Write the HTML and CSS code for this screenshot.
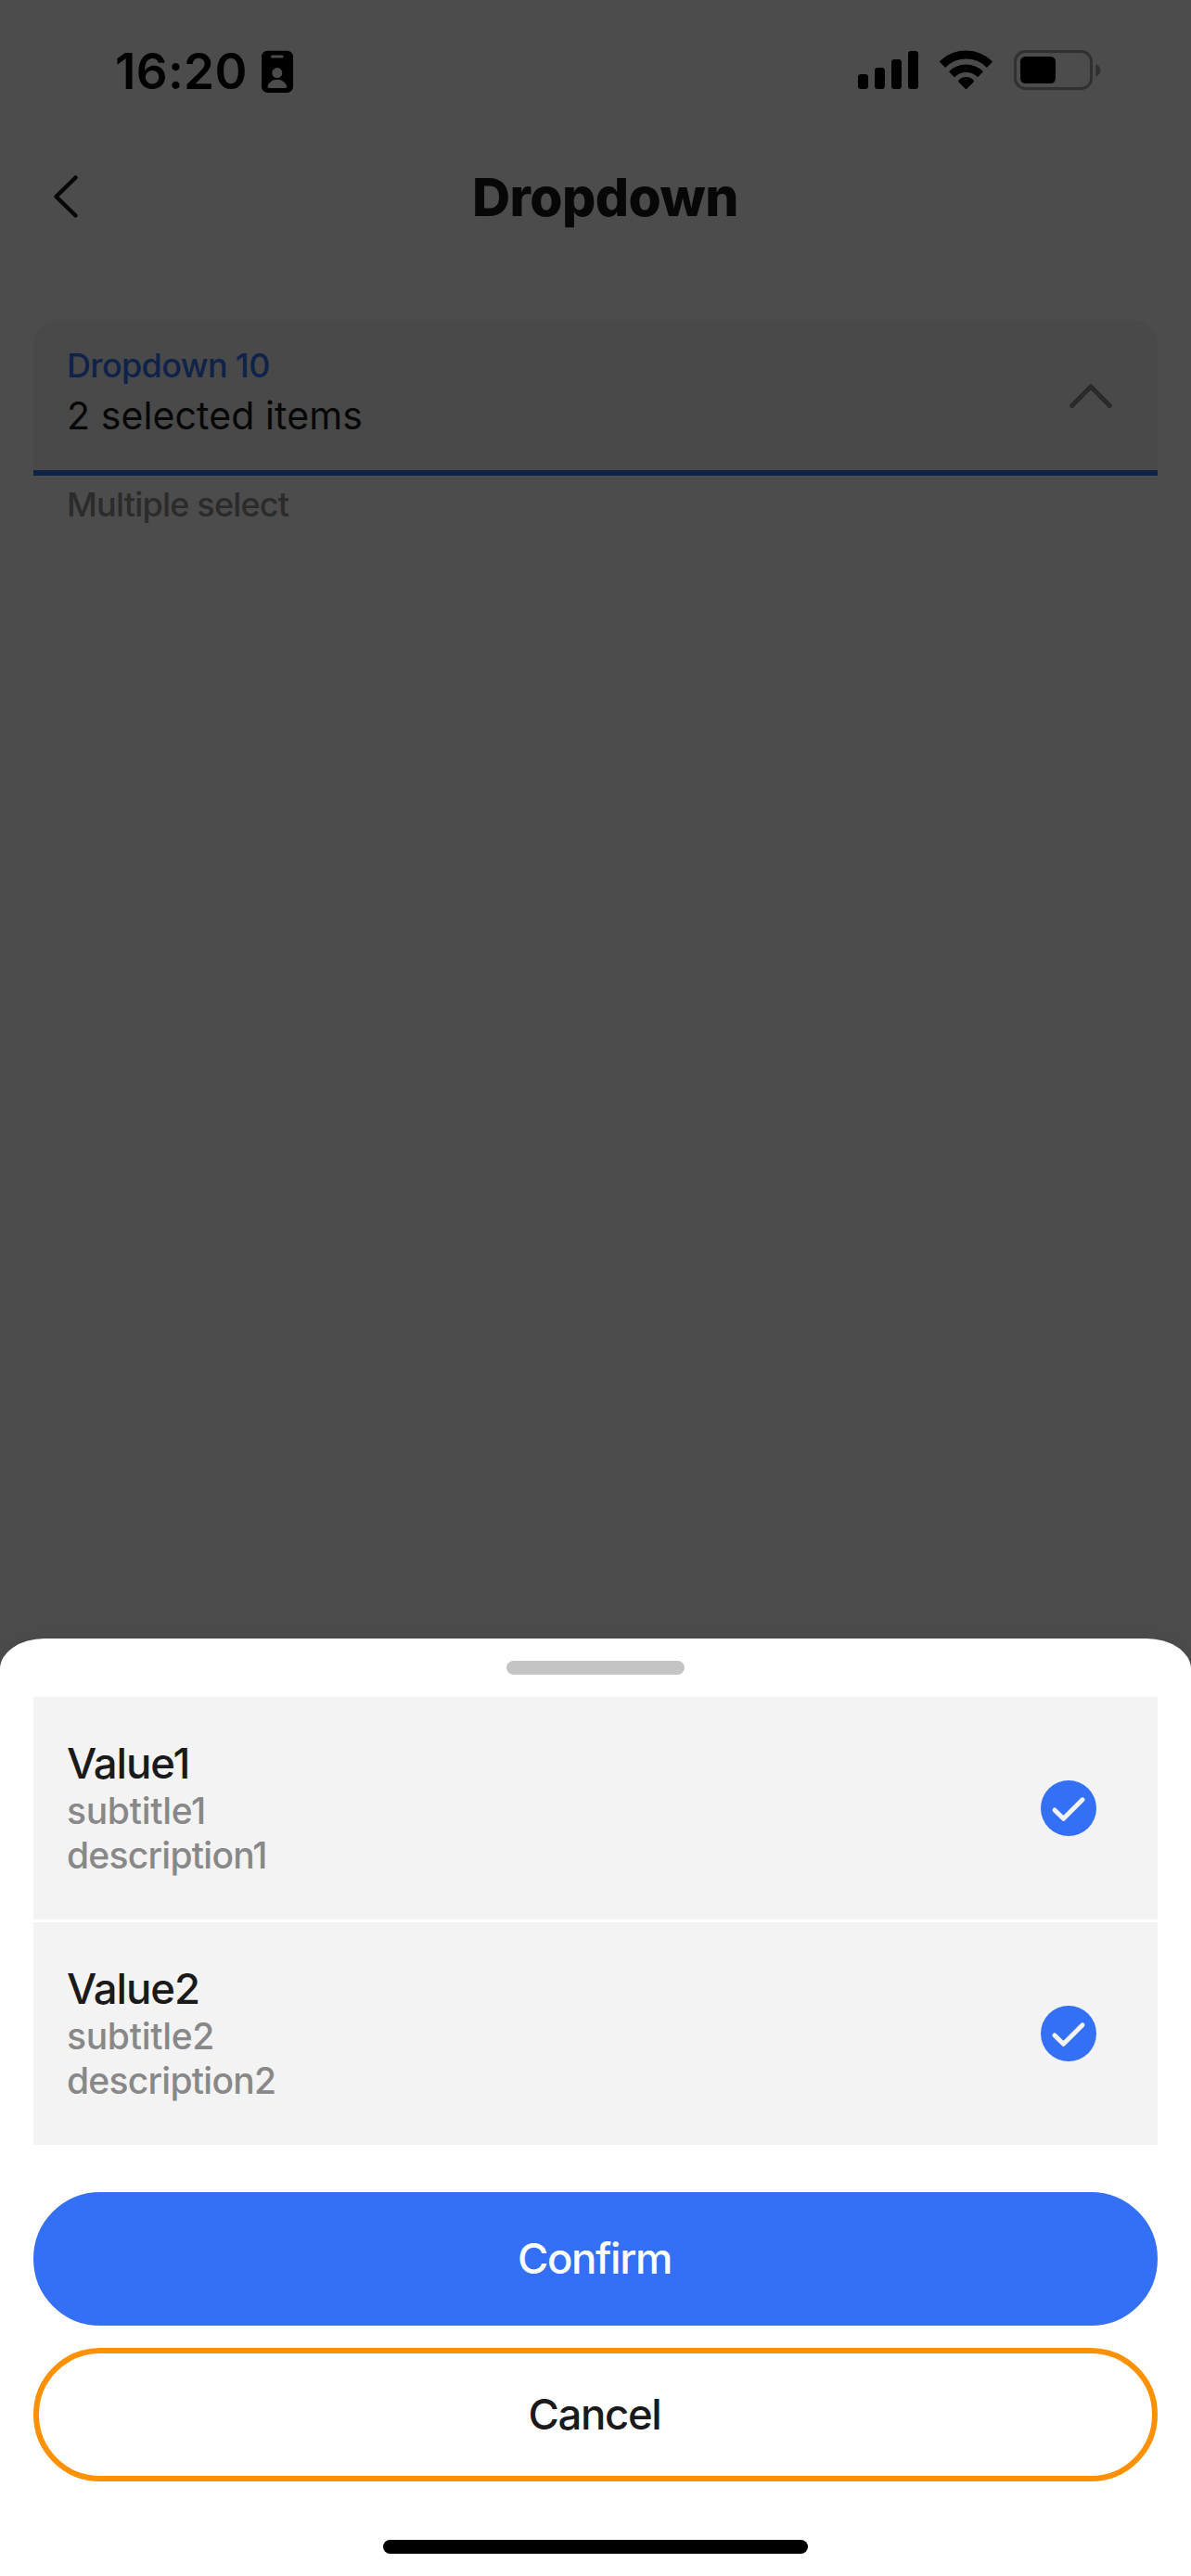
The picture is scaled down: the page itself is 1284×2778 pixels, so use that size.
FILE: index.html
```html
<!DOCTYPE html>
<html lang="en">
<head>
<meta charset="utf-8">
<title>Dropdown</title>
<link rel="stylesheet" href="styles.css">
</head>
<body>
<div class="screen">
  <div class="status">
    <span class="clock">16:20</span>
    <svg class="badge" width="34" height="46" viewBox="282 54 34 46">
      <rect x="282" y="54.7" width="34" height="45.2" rx="6.5" fill="#000"/>
      <rect x="292" y="59.6" width="13.6" height="3" rx="1.5" fill="#4c4c4c"/>
      <circle cx="298.8" cy="78.6" r="5.5" fill="#4c4c4c"/>
      <path d="M290 95Q288.300 95 288.600 93.200C290 88.500 294 85.800 298.800 85.800S307.600 88.500 309.200 93.200Q309.500 95 307.600 95Z" fill="#4c4c4c"/>
    </svg>
    <div class="indicators">
      <svg width="65" height="46" viewBox="925 54 65 46">
        <rect x="925" y="80" width="11" height="16" rx="3.3"/>
        <rect x="943" y="73" width="11" height="23" rx="3.3"/>
        <rect x="961" y="64" width="11" height="32" rx="3.3"/>
        <rect x="979" y="55" width="11" height="41" rx="3.3"/>
      </svg>
      <svg width="58" height="46" viewBox="1013 54 58 46">
        <path d="M1016 69.700A36 36 0 0 1 1067 69.700" fill="none" stroke="#000" stroke-width="9"/>
        <path d="M1026 80.200A22 22 0 0 1 1057 80.200" fill="none" stroke="#000" stroke-width="8.500"/>
        <path d="M1033.500 88.400Q1032.400 87.300 1033.600 86.200Q1037 83 1041.500 83T1049.400 86.200Q1050.600 87.300 1049.500 88.400L1042.500 95.500Q1041.500 96.500 1040.500 95.500Z"/>
      </svg>
      <svg width="94" height="46" viewBox="1093 54 94 46">
        <rect x="1094.500" y="55.500" width="82" height="40" rx="11" fill="none" stroke="#303030" stroke-width="3"/>
        <rect x="1100" y="61" width="38" height="29" rx="5.500"/>
        <path d="M1181.300 69C1184.600 70.200 1186.500 72.800 1186.500 75.700S1184.600 81.200 1181.300 82.400Z" fill="#303030"/>
      </svg>
    </div>
  </div>

  <div class="header">
    <svg class="back" width="32" height="50" viewBox="0 0 32 50">
      <path d="M26.500 4.500L5.500 25L26.500 45.500" fill="none" stroke="#070707" stroke-width="4.500" stroke-linecap="round" stroke-linejoin="round"/>
    </svg>
    <h1 class="title">Dropdown</h1>
  </div>

  <div class="form">
    <div class="field">
      <div class="field-text">
        <div class="label">Dropdown 10</div>
        <div class="value">2 selected items</div>
      </div>
      <svg width="48" height="30" viewBox="0 0 48 30">
        <path d="M3.700 26.500L24 6L44.300 26.500" fill="none" stroke="#2a2a2a" stroke-width="5" stroke-linecap="round" stroke-linejoin="round"/>
      </svg>
    </div>
    <div class="helper">Multiple select</div>
  </div>

  <div class="sheet">
    <div class="handle"></div>
    <div class="options">
      <div class="option">
        <div>
          <div class="name">Value1</div>
          <div class="subtitle">subtitle1</div>
          <div class="description">description1</div>
        </div>
        <svg width="60" height="60" viewBox="0 0 60 60">
          <circle cx="30" cy="30" r="30" fill="#3370f6"/>
          <path d="M15 32L24.500 41.300L45 20.800" fill="none" stroke="#f3f3f3" stroke-width="5" stroke-linecap="round" stroke-linejoin="round"/>
        </svg>
      </div>
      <div class="option">
        <div>
          <div class="name">Value2</div>
          <div class="subtitle">subtitle2</div>
          <div class="description">description2</div>
        </div>
        <svg width="60" height="60" viewBox="0 0 60 60">
          <circle cx="30" cy="30" r="30" fill="#3370f6"/>
          <path d="M15 32L24.500 41.300L45 20.800" fill="none" stroke="#f3f3f3" stroke-width="5" stroke-linecap="round" stroke-linejoin="round"/>
        </svg>
      </div>
    </div>
    <div class="actions">
      <button class="button confirm">Confirm</button>
      <button class="button cancel">Cancel</button>
    </div>
    <div class="home-bar"></div>
  </div>
</div>
</body>
</html>
```
FILE: styles.css
```css
* { box-sizing: border-box; }

body {
  margin: 0;
  font-family: Inter, "Liberation Sans", sans-serif;
  background: #4c4c4c;
}

svg { display: block; flex: none; }

.screen {
  display: flex;
  flex-direction: column;
  width: 1284px;
  height: 2778px;
  overflow: hidden;
}

.status {
  display: flex;
  align-items: center;
  height: 142px;
  padding: 12px 97px 0 124px;
}

.clock {
  width: 158px;
  font-size: 53px;
  font-weight: 600;
  line-height: 62px;
  letter-spacing: 0.3px;
  color: #000;
}

.indicators {
  display: flex;
  gap: 22.5px;
  margin-left: auto;
}

.header {
  display: flex;
  align-items: center;
  height: 140px;
  padding-left: 55px;
}

.title {
  margin: 0 0 0 422px;
  padding-top: 2px;
  font-size: 57px;
  font-weight: 800;
  line-height: 70px;
  letter-spacing: -0.6px;
  color: #070707;
}

.form {
  padding: 63px 36px 0;
}

.field {
  display: flex;
  align-items: center;
  justify-content: space-between;
  height: 168px;
  padding: 0 48px 0 36px;
  border-bottom: 6px solid #0f224a;
  border-radius: 27px 27px 0 0;
  background: #494949;
}

.field-text { padding-bottom: 4px; }

.label {
  font-size: 36px;
  font-weight: 450;
  line-height: 48px;
  letter-spacing: -0.65px;
  color: #0f224a;
}

.value {
  font-size: 41px;
  line-height: 60px;
  letter-spacing: 0.1px;
  color: #070707;
}

.helper {
  margin: 7px 0 0 36px;
  font-size: 36px;
  font-weight: 450;
  line-height: 48px;
  letter-spacing: -0.8px;
  color: #2b2b2b;
}

.sheet {
  display: flex;
  flex-direction: column;
  height: 1011px;
  margin-top: auto;
  padding: 24px 36px;
  border-radius: 48px 48px 0 0 / 33px 33px 0 0;
  background: #fff;
  box-shadow: 0 0 30px rgba(0, 0, 0, 0.06);
}

.handle {
  align-self: center;
  width: 192px;
  height: 15px;
  border-radius: 8px;
  background: #c4c4c4;
}

.options {
  display: flex;
  flex-direction: column;
  gap: 3px;
  margin-top: 24px;
}

.option {
  display: flex;
  align-items: center;
  justify-content: space-between;
  height: 240px;
  padding: 0 66px 0 36px;
  background: #f3f3f3;
}

.name {
  font-size: 45.5px;
  font-weight: 450;
  line-height: 54px;
  letter-spacing: -1.05px;
  color: #1a1a1a;
}

.subtitle,
.description {
  font-size: 39px;
  font-weight: 450;
  line-height: 48px;
  letter-spacing: -0.3px;
  color: #888;
}

.description { letter-spacing: -0.75px; }

.actions {
  display: flex;
  flex-direction: column;
  gap: 24px;
  margin-top: 51px;
}

.button {
  height: 144px;
  padding: 0 2px 0 0;
  border: 6px solid #3370f6;
  border-radius: 72px;
  font-family: inherit;
  font-size: 45.5px;
  font-weight: 450;
  line-height: 54px;
  letter-spacing: -1.35px;
}

.confirm { background: #3370f6; color: #fff; }

.cancel { border-color: #ff9100; background: #fff; color: #1a1a1a; }

.home-bar {
  align-self: center;
  width: 458px;
  height: 15px;
  margin-top: 63px;
  border-radius: 8px;
  background: #000;
}
```
